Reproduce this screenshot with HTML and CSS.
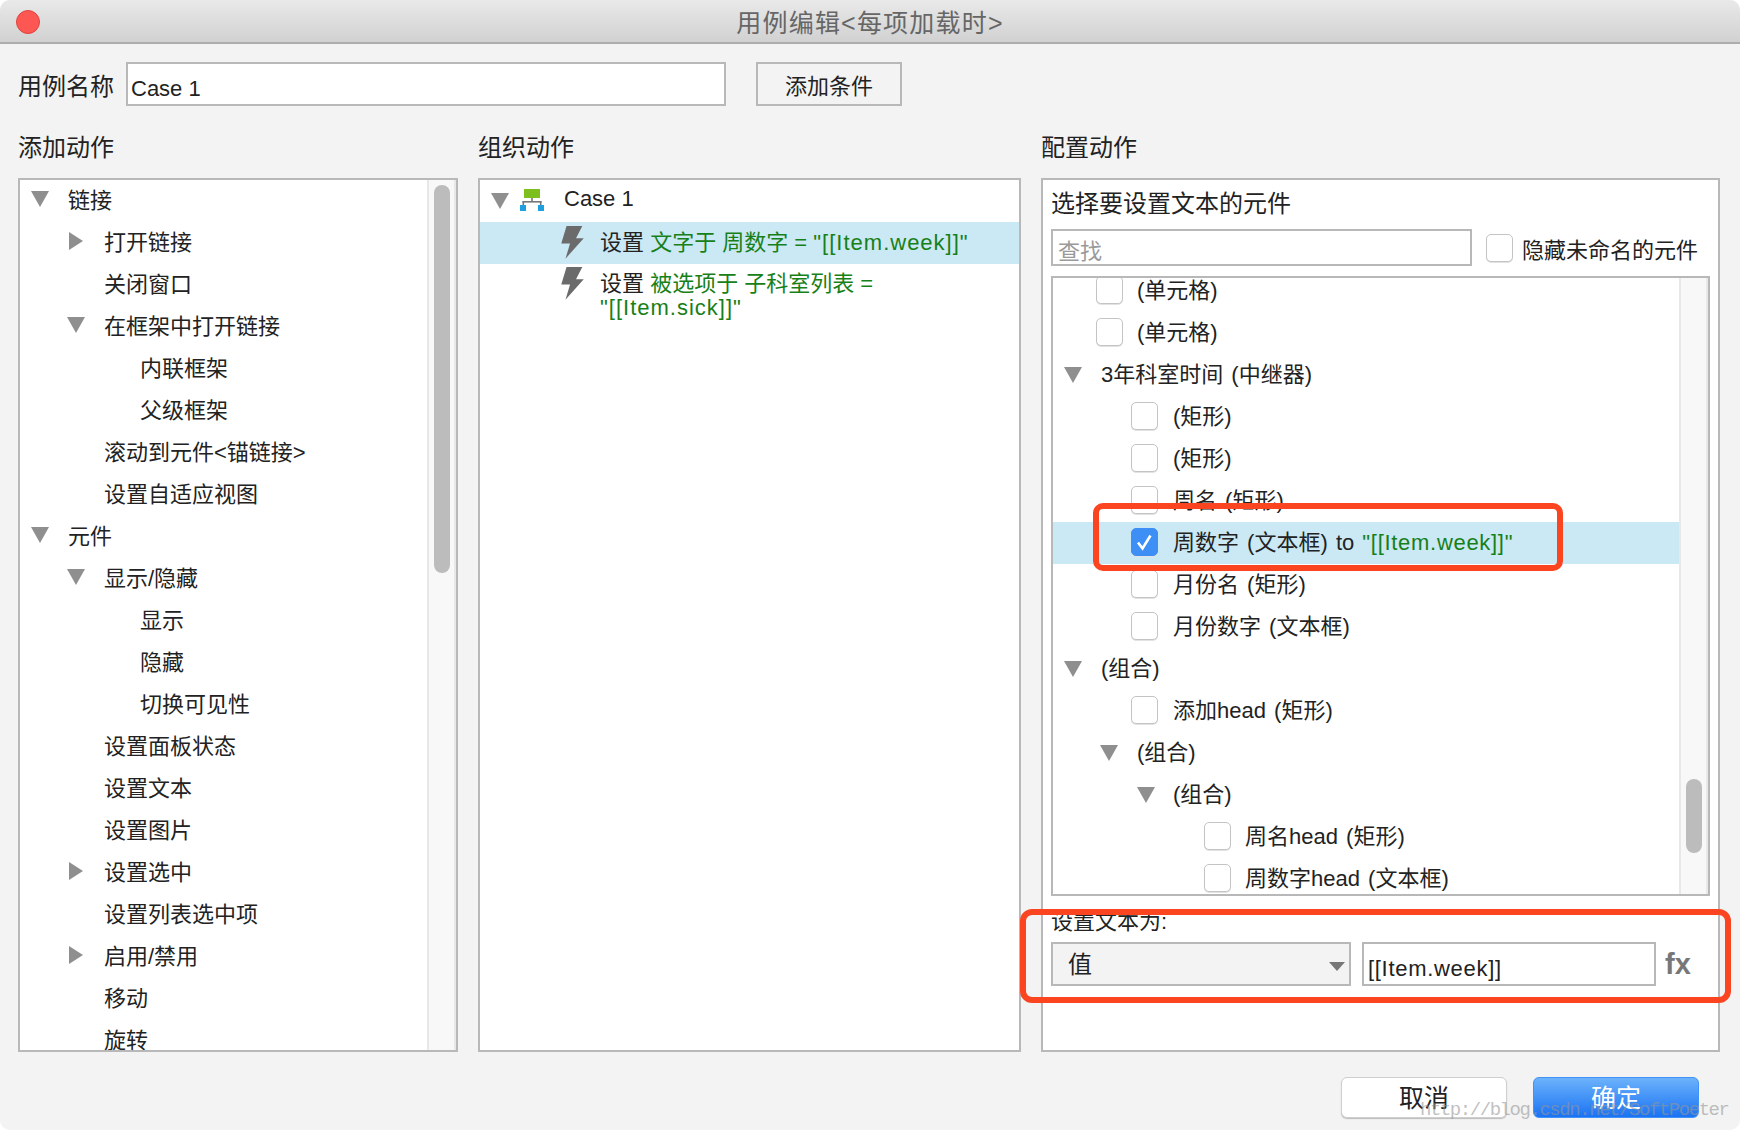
FILE: index.html
```html
<!DOCTYPE html>
<html lang="en">
<head>
  <meta charset="UTF-8" />
  <title>用例编辑</title>
  <link rel="stylesheet" href="styles.css">
</head>
<body>
  <div class="window">
    <div class="titlebar">
      <span class="close-dot"></span>
      <span class="title">用例编辑&lt;每项加载时&gt;</span>
    </div>

    <div class="name-row">
      <label class="name-label">用例名称</label>
      <div class="field name-field">Case 1</div>
      <button class="btn-cond">添加条件</button>
    </div>

    <div class="columns">
      <section class="col">
        <h2>添加动作</h2>
        <div class="panel tree-panel">
          <div class="tree">
            <div class="row l0"><i class="arrow down"></i>链接</div>
            <div class="row l1"><i class="arrow right"></i>打开链接</div>
            <div class="row l1"><i class="arrow none"></i>关闭窗口</div>
            <div class="row l1"><i class="arrow down"></i>在框架中打开链接</div>
            <div class="row l2"><i class="arrow none"></i>内联框架</div>
            <div class="row l2"><i class="arrow none"></i>父级框架</div>
            <div class="row l1"><i class="arrow none"></i>滚动到元件&lt;锚链接&gt;</div>
            <div class="row l1"><i class="arrow none"></i>设置自适应视图</div>
            <div class="row l0"><i class="arrow down"></i>元件</div>
            <div class="row l1"><i class="arrow down"></i>显示/隐藏</div>
            <div class="row l2"><i class="arrow none"></i>显示</div>
            <div class="row l2"><i class="arrow none"></i>隐藏</div>
            <div class="row l2"><i class="arrow none"></i>切换可见性</div>
            <div class="row l1"><i class="arrow none"></i>设置面板状态</div>
            <div class="row l1"><i class="arrow none"></i>设置文本</div>
            <div class="row l1"><i class="arrow none"></i>设置图片</div>
            <div class="row l1"><i class="arrow right"></i>设置选中</div>
            <div class="row l1"><i class="arrow none"></i>设置列表选中项</div>
            <div class="row l1"><i class="arrow right"></i>启用/禁用</div>
            <div class="row l1"><i class="arrow none"></i>移动</div>
            <div class="row l1"><i class="arrow none"></i>旋转</div>
          </div>
          <div class="scroll-track"><div class="thumb thumb-left"></div></div>
        </div>
      </section>

      <section class="col">
        <h2>组织动作</h2>
        <div class="panel org-panel">
          <div class="case-row">
            <i class="arrow down"></i>
            <svg class="org-icon" width="24" height="22" viewBox="0 0 24 22">
              <rect x="4" y="0" width="16" height="9" fill="#7cbf1e"/>
              <rect x="11.2" y="9" width="1.6" height="4" fill="#777"/>
              <rect x="2.5" y="12" width="19" height="1.6" fill="#777"/>
              <rect x="2.5" y="12" width="1.6" height="5" fill="#777"/>
              <rect x="19.9" y="12" width="1.6" height="5" fill="#777"/>
              <rect x="0" y="16" width="6" height="6" fill="#1d9fe0"/>
              <rect x="18" y="16" width="6" height="6" fill="#1d9fe0"/>
            </svg>
            Case 1
          </div>
          <div class="action selected">
            <svg class="bolt" width="25" height="33" viewBox="0 0 64 94"><polygon points="15,0 60,0 42,35 64,35 12,93 25,50 0,50" fill="#6b6b6b"/></svg>
            <span>设置 <em>文字于 周数字 = <b class="expr">"[[Item.week]]"</b></em></span>
          </div>
          <div class="action">
            <svg class="bolt" width="25" height="33" viewBox="0 0 64 94"><polygon points="15,0 60,0 42,35 64,35 12,93 25,50 0,50" fill="#6b6b6b"/></svg>
            <span>设置 <em>被选项于 子科室列表 =<br><b class="expr">"[[Item.sick]]"</b></em></span>
          </div>
        </div>
      </section>

      <section class="col">
        <h2>配置动作</h2>
        <div class="panel config-panel">
          <div class="config-title">选择要设置文本的元件</div>
          <div class="search-row">
            <div class="field search-field">查找</div>
            <span class="cb"></span>
            <span class="hide-label">隐藏未命名的元件</span>
          </div>
          <div class="widget-list">
            <div class="tree widget-tree">
              <div class="row c0"><span class="cb"></span>(单元格)</div>
              <div class="row c0"><span class="cb"></span>(单元格)</div>
              <div class="row a0"><i class="arrow down"></i>3年科室时间 (中继器)</div>
              <div class="row c1"><span class="cb"></span>(矩形)</div>
              <div class="row c1"><span class="cb"></span>(矩形)</div>
              <div class="row c1"><span class="cb"></span>周名 (矩形)</div>
              <div class="row c1 selected">
                <span class="cb checked">
                  <svg width="27" height="28" viewBox="0 0 27 28"><path d="M7 14.5 L11.5 20.5 L19.5 7.5" fill="none" stroke="#fff" stroke-width="2.6"/></svg>
                </span>
                <span>周数字 (文本框) to <em>"[[Item.week]]"</em></span>
              </div>
              <div class="row c1"><span class="cb"></span>月份名 (矩形)</div>
              <div class="row c1"><span class="cb"></span>月份数字 (文本框)</div>
              <div class="row a0"><i class="arrow down"></i>(组合)</div>
              <div class="row c1"><span class="cb"></span>添加head (矩形)</div>
              <div class="row a1"><i class="arrow down"></i>(组合)</div>
              <div class="row a2"><i class="arrow down"></i>(组合)</div>
              <div class="row c3"><span class="cb"></span>周名head (矩形)</div>
              <div class="row c3"><span class="cb"></span>周数字head (文本框)</div>
            </div>
            <div class="scroll-track"><div class="thumb thumb-right"></div></div>
          </div>
          <div class="set-label">设置文本为:</div>
          <div class="set-row">
            <div class="select"><span>值</span><i class="select-arrow"></i></div>
            <div class="field value-field">[[Item.week]]</div>
            <span class="fx">fx</span>
          </div>
        </div>
      </section>
    </div>

    <div class="footer">
      <button class="btn btn-cancel">取消</button>
      <button class="btn btn-ok">确定</button>
    </div>

    <!-- red annotations painted over the dialog -->
    <div class="mark mark-row"></div>
    <div class="mark mark-value"></div>
    <div class="watermark">http://blog.csdn.net/SoftPoeter</div>
  </div>
</body>
</html>
```

FILE: styles.css
```css
* { box-sizing: border-box; }
html, body {
  margin: 0;
  padding: 0;
  background: #fff;
}
body {
  font-family: "Liberation Sans", "Noto Sans CJK SC", sans-serif;
  font-size: 22px;
  color: #222;
}
.window {
  width: 1740px;
  height: 1130px;
  background: #f3f3f3;
  border-radius: 10px;
  overflow: hidden;
  position: relative;
}
.titlebar {
  height: 44px;
  background: linear-gradient(#e9e9e9, #d1d1d1);
  border-bottom: 2px solid #adadad;
  display: flex;
  align-items: center;
  justify-content: center;
  position: relative;
}
.close-dot {
  position: absolute;
  left: 16px;
  top: 10px;
  width: 24px;
  height: 24px;
  border-radius: 50%;
  background: #fc5753;
  border: 1px solid #e0443e;
}
.title {
  font-size: 25px;
  letter-spacing: 1.2px;
  color: #666;
}

.name-row {
  display: flex;
  align-items: center;
  height: 44px;
  margin-top: 18px;
  padding-left: 18px;
}
.name-label {
  font-size: 24px;
  width: 108px;
}
.field {
  background: #fff;
  border: 2px solid #b8b8b8;
  display: flex;
  align-items: center;
}
.name-field {
  width: 600px;
  height: 44px;
  padding: 9px 0 0 3px;
}
.btn-cond {
  margin-left: 30px;
  width: 146px;
  height: 44px;
  background: #f3f3f3;
  border: 2px solid #b8b8b8;
  font: inherit;
  color: #222;
  padding: 0;
}

.columns {
  display: grid;
  grid-template-columns: 440px 543px 679px;
  column-gap: 20px;
  padding-left: 18px;
  margin-top: 20px;
}
h2 {
  margin: 0;
  height: 44px;
  line-height: 44px;
  font-size: 24px;
  font-weight: 400;
}
.panel {
  height: 874px;
  margin-top: 8px;
  background: #fff;
  border: 2px solid #b8b8b8;
}
.tree-panel {
  display: flex;
  overflow: hidden;
}
.tree {
  flex: 1;
  min-width: 0;
}
.tree-panel .tree { margin-top: -2px; }
.row {
  height: 42px;
  padding-bottom: 2px;
  display: flex;
  align-items: center;
  white-space: nowrap;
}
.row .arrow, .row .cb { margin-top: 2px; }
.row.l0, .row.a0 { padding-left: 11px; }
.row.l1, .row.a1 { padding-left: 47px; }
.row.l2 { padding-left: 83px; }
.row.a2 { padding-left: 84px; }
.row.c0 { padding-left: 43px; }
.row.c1 { padding-left: 78px; }
.row.c3 { padding-left: 151px; }
.row.selected { background: #cbe8f5; }
.widget-tree .row {
  word-spacing: 2px;
  padding-bottom: 7px;
}
.widget-tree .row .arrow { margin-top: 7px; }
.widget-tree .row .cb { margin-top: 5px; }

.arrow {
  flex: none;
  display: block;
  width: 18px;
  height: 0;
  margin-right: 19px;
}
.arrow.none { height: 0; }
.arrow.down {
  height: 16px;
  border-left: 9px solid transparent;
  border-right: 9px solid transparent;
  border-top: 16px solid #8f8f8f;
}
.arrow.right {
  width: 14px;
  height: 18px;
  margin-left: 2px;
  margin-right: 21px;
  border-top: 9px solid transparent;
  border-bottom: 9px solid transparent;
  border-left: 14px solid #8f8f8f;
}
.a2 .arrow { margin-right: 18px; }

.scroll-track {
  flex: none;
  width: 29px;
  background: #f8f8f8;
  border-left: 2px solid #e8e8e8;
  border-right: 2px solid #e8e8e8;
}
.thumb {
  width: 16px;
  border-radius: 8px;
  background: #bcbcbc;
  margin-left: 5px;
}
.thumb-left {
  height: 388px;
  margin-top: 5px;
}
.thumb-right {
  height: 74px;
  margin-top: 501px;
}

.case-row {
  height: 42px;
  display: flex;
  align-items: center;
  padding: 0 0 4px 11px;
}
.case-row .arrow { margin: 4px 11px 0 0; }
.org-icon { margin: 2px 20px 0 0; }
.action {
  min-height: 42px;
  display: flex;
  padding: 3px 0 0 80px;
  line-height: 24px;
}
.action.selected {
  background: #cbe8f5;
  padding-top: 4px;
  align-items: flex-start;
}
.action span { padding-top: 5px; }
.action .bolt {
  flex: none;
  margin-right: 15px;
}
em {
  font-style: normal;
  color: #178017;
}
.expr {
  font-weight: 400;
  letter-spacing: 1px;
}

.config-panel { padding: 1px 0 0 8px; }
.config-title {
  height: 44px;
  line-height: 46px;
  font-size: 24px;
}
.search-row {
  display: flex;
  align-items: center;
  height: 37px;
  margin-top: 4px;
}
.search-field {
  width: 421px;
  height: 37px;
  padding: 3px 0 0 5px;
  color: #9a9a9a;
}
.cb {
  flex: none;
  display: block;
  width: 27px;
  height: 28px;
  margin-right: 14px;
  background: #fff;
  border: 1px solid #c4c4c4;
  border-radius: 5px;
  box-shadow: 0 1px 0 #e2e2e2;
}
.c1 .cb { margin-right: 15px; }
.cb.checked {
  background: #3d8ef5;
  border-color: #3d8ef5;
  overflow: hidden;
}
.cb.checked svg {
  display: block;
  margin: -1px;
}
.search-row .cb {
  margin-left: 14px;
  margin-right: 9px;
}
.hide-label { white-space: nowrap; }

.widget-list {
  width: 659px;
  height: 620px;
  margin-top: 10px;
  border: 2px solid #b8b8b8;
  display: flex;
  overflow: hidden;
}
.widget-tree { margin-top: -8px; }
.widget-tree em { letter-spacing: 0.7px; }
.set-label {
  height: 32px;
  line-height: 32px;
  margin-top: 10px;
}
.set-row {
  display: flex;
  align-items: center;
  height: 44px;
  margin-top: 4px;
}
.select {
  width: 300px;
  height: 44px;
  background: #f3f3f3;
  border: 2px solid #b8b8b8;
  display: flex;
  align-items: center;
  justify-content: space-between;
  padding: 0 0 4px 15px;
  font-size: 24px;
}
.select-arrow {
  width: 16px;
  height: 9px;
  margin: 8px 4px 0 0;
  border-left: 8px solid transparent;
  border-right: 8px solid transparent;
  border-top: 9px solid #777;
}
.value-field {
  width: 294px;
  height: 44px;
  margin-left: 11px;
  padding: 9px 0 0 4px;
  letter-spacing: 0.7px;
}
.fx {
  margin-left: 9px;
  font-size: 29px;
  font-weight: 700;
  color: #777;
}

.footer {
  display: flex;
  justify-content: flex-end;
  gap: 26px;
  padding-right: 41px;
  margin-top: 25px;
}
.btn {
  width: 166px;
  height: 41px;
  border-radius: 6px;
  font: inherit;
  font-size: 25px;
  padding: 0 0 4px;
}
.btn-cancel {
  background: #fff;
  border: 1px solid #cfcfcf;
  box-shadow: 0 1px 1px #bbb;
  color: #222;
}
.btn-ok {
  background: linear-gradient(#6cb2fb, #1a73f3);
  border: 1px solid #3f92f7;
  color: #fff;
}

.mark {
  position: absolute;
  border: 6px solid #fb4520;
}
.mark-row {
  left: 1093px;
  top: 503px;
  width: 470px;
  height: 68px;
  border-radius: 10px;
}
.mark-value {
  left: 1020px;
  top: 909px;
  width: 711px;
  height: 94px;
  border-radius: 12px;
}
.watermark {
  position: absolute;
  left: 1420px;
  top: 1097px;
  font-family: "Liberation Mono", monospace;
  font-size: 19px;
  letter-spacing: -1.45px;
  line-height: 26px;
  color: rgba(150, 150, 150, 0.6);
  white-space: nowrap;
}
```
